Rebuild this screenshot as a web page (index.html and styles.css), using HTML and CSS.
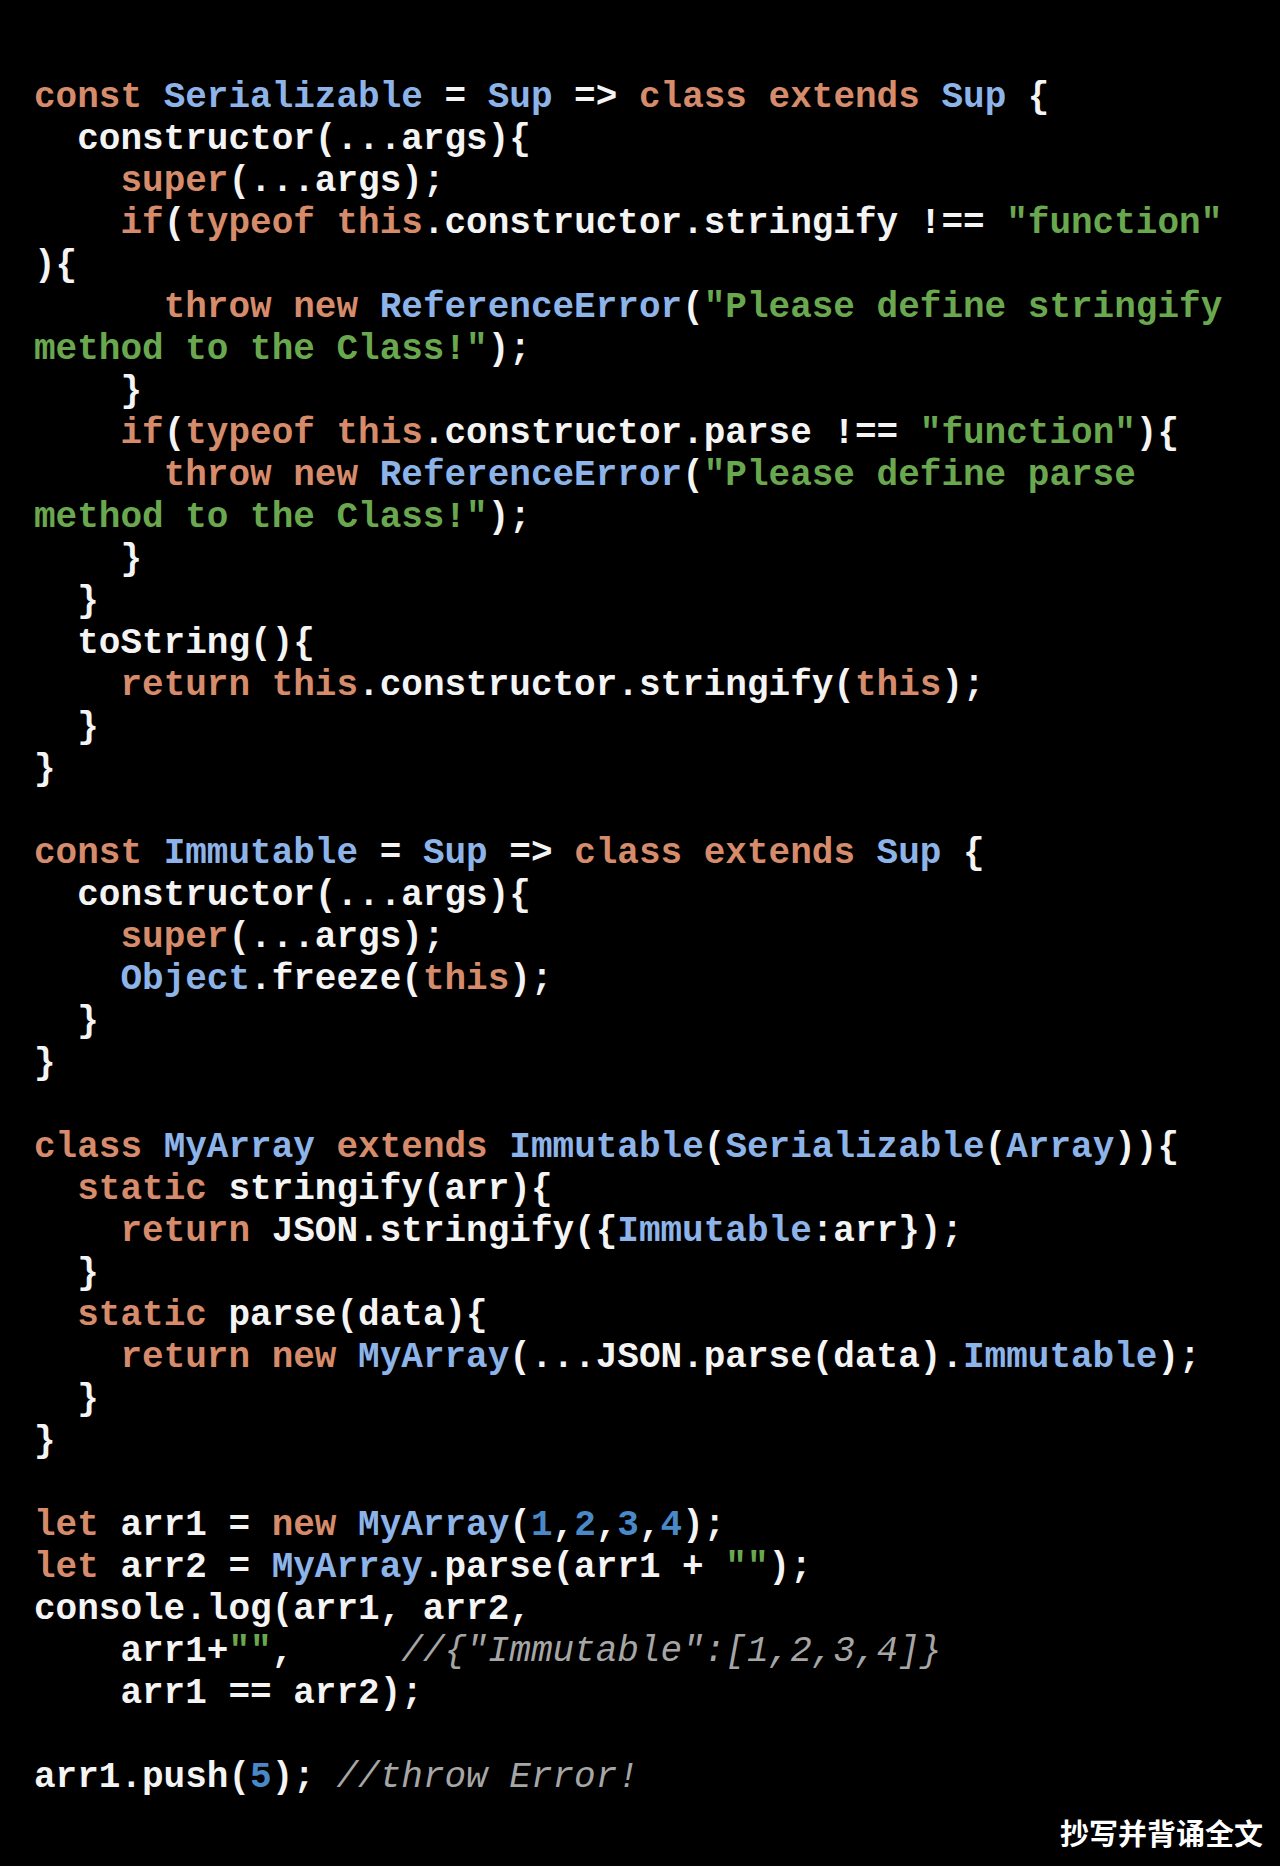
FILE: index.html
```html
<!DOCTYPE html>
<html lang="zh">
<head>
<meta charset="utf-8">
<title>Code</title>
<link rel="stylesheet" href="styles.css">
</head>
<body>
<main class="page">
<pre class="code"><span class="k">const</span> <span class="t">Serializable</span> = <span class="t">Sup</span> =&gt; <span class="k">class</span> <span class="k">extends</span> <span class="t">Sup</span> {
  constructor(...args){
    <span class="k">super</span>(...args);
    <span class="k">if</span>(<span class="k">typeof</span> <span class="k">this</span>.constructor.stringify !== <span class="s">"function"</span>
){
      <span class="k">throw</span> <span class="k">new</span> <span class="t">ReferenceError</span>(<span class="s">"Please define stringify</span>
<span class="s">method to the Class!"</span>);
    }
    <span class="k">if</span>(<span class="k">typeof</span> <span class="k">this</span>.constructor.parse !== <span class="s">"function"</span>){
      <span class="k">throw</span> <span class="k">new</span> <span class="t">ReferenceError</span>(<span class="s">"Please define parse</span>
<span class="s">method to the Class!"</span>);
    }
  }
  toString(){
    <span class="k">return</span> <span class="k">this</span>.constructor.stringify(<span class="k">this</span>);
  }
}

<span class="k">const</span> <span class="t">Immutable</span> = <span class="t">Sup</span> =&gt; <span class="k">class</span> <span class="k">extends</span> <span class="t">Sup</span> {
  constructor(...args){
    <span class="k">super</span>(...args);
    <span class="t">Object</span>.freeze(<span class="k">this</span>);
  }
}

<span class="k">class</span> <span class="t">MyArray</span> <span class="k">extends</span> <span class="t">Immutable</span>(<span class="t">Serializable</span>(<span class="t">Array</span>)){
  <span class="k">static</span> stringify(arr){
    <span class="k">return</span> JSON.stringify({<span class="t">Immutable</span>:arr});
  }
  <span class="k">static</span> parse(data){
    <span class="k">return</span> <span class="k">new</span> <span class="t">MyArray</span>(...JSON.parse(data).<span class="t">Immutable</span>);
  }
}

<span class="k">let</span> arr1 = <span class="k">new</span> <span class="t">MyArray</span>(<span class="n">1</span>,<span class="n">2</span>,<span class="n">3</span>,<span class="n">4</span>);
<span class="k">let</span> arr2 = <span class="t">MyArray</span>.parse(arr1 + <span class="s">""</span>);
console.log(arr1, arr2,
    arr1+<span class="s">""</span>,     <span class="c">//{"Immutable":[1,2,3,4]}</span>
    arr1 == arr2);

arr1.push(<span class="n">5</span>); <span class="c">//throw Error!</span></pre>
<div class="mark">抄写并背诵全文</div>
</main>
</body>
</html>
```

FILE: styles.css
```css
html, body {
  margin: 0;
  padding: 0;
  background: #000;
}

.page {
  position: relative;
  width: 1280px;
  height: 1866px;
  background: #000;
  overflow: hidden;
}

.code {
  margin: 0;
  padding: 77px 0 0 34px;
  font-family: "Liberation Mono", "Courier New", monospace;
  font-size: 36px;
  font-weight: bold;
  line-height: 42px;
  color: #f4f4f4;
  white-space: pre;
}

.k { color: #d68b6b; }
.t { color: #8db4e9; }
.s { color: #6aa84f; }
.n { color: #4a89c8; }
.c { color: #a6a6a6; font-style: italic; font-weight: normal; }

.mark {
  position: absolute;
  right: 17px;
  bottom: 16px;
  font-family: "Noto Sans CJK SC", "Noto Sans", sans-serif;
  font-size: 29px;
  font-weight: bold;
  color: #fff;
  line-height: 1.2;
}
```
